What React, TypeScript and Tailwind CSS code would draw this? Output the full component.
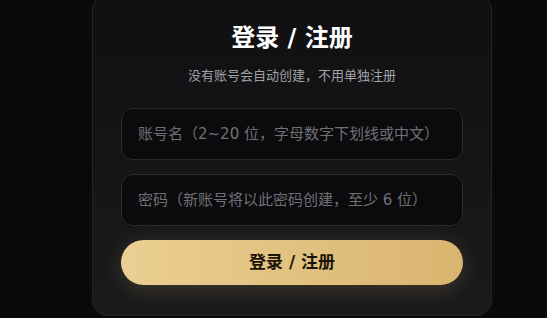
import React from "react";

export default function App() {
  const font = { fontFamily: '"DejaVu Sans", "Noto Sans CJK SC", sans-serif' };
  return (
    <div className="w-[547px] h-[318px] overflow-hidden bg-[#0a0a0c]" style={font}>
      <div className="ml-[92px] mt-[-6px] w-[400px] h-[322px] rounded-[16px] border border-[#242427] bg-gradient-to-b from-[#101012] to-[#1a1a1c] px-[28px] pt-[27px] flex flex-col">
        <h1 className="text-center text-[24px] leading-[32px] font-bold text-white">登录 / 注册</h1>
        <p className="mt-[14px] text-center text-[13px] leading-[16px] text-[#a1a1a6]">没有账号会自动创建，不用单独注册</p>
        <div className="mt-[24px] flex flex-col gap-[14px]">
          <input
            className="h-[52px] w-full rounded-[12px] border border-[#2a2a2d] bg-[#0b0b0d] px-[16px] text-[15px] text-white placeholder:text-[#707075] outline-none"
            placeholder="账号名（2~20 位，字母数字下划线或中文）"
            style={font}
          />
          <input
            type="password"
            className="h-[52px] w-full rounded-[12px] border border-[#2a2a2d] bg-[#0b0b0d] px-[16px] text-[15px] text-white placeholder:text-[#707075] outline-none"
            placeholder="密码（新账号将以此密码创建，至少 6 位）"
            style={font}
          />
          <button
            className="h-[45px] w-full rounded-full bg-gradient-to-r from-[#ebcf92] to-[#d9b56f] text-[17px] font-bold text-[#1a1408] shadow-[0_4px_22px_rgba(214,178,108,0.22)]"
            style={font}
          >
            登录 / 注册
          </button>
        </div>
      </div>
    </div>
  );
}
